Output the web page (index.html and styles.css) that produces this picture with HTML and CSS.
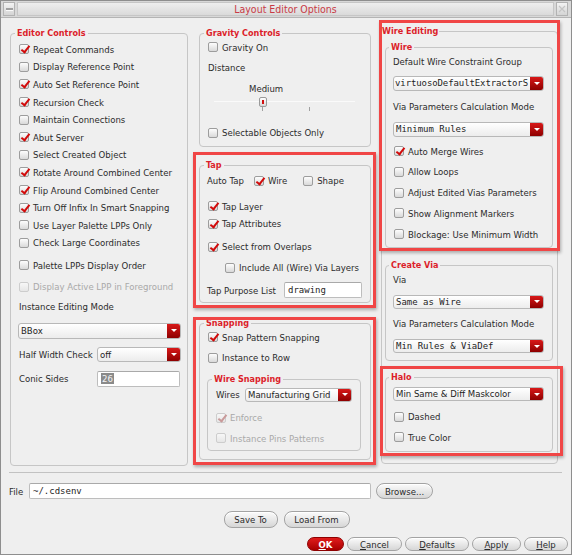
FILE: index.html
```html
<!DOCTYPE html>
<html lang="en">
<head>
<meta charset="utf-8">
<title>Layout Editor Options</title>
<link rel="stylesheet" href="styles.css">
</head>
<body>
<div class="window">
  <div class="titlebar">
    <div class="tb-btn"><span class="tb-dash"></span></div>
    <div class="tb-title">Layout Editor Options</div>
    <div class="tb-btn"><svg width="8" height="8" viewBox="0 0 8 8"><path d="M1 1L7 7M7 1L1 7" stroke="#c4c4c4" stroke-width="1.2"/></svg></div>
  </div>

  <div class="main">
    <!-- left column -->
    <div class="group editor">
      <div class="gtitle">Editor Controls</div>
      <div class="list17">
        <div class="chk"><span class="box on"></span>Repeat Commands</div>
        <div class="chk"><span class="box"></span>Display Reference Point</div>
        <div class="chk"><span class="box on"></span>Auto Set Reference Point</div>
        <div class="chk"><span class="box on"></span>Recursion Check</div>
        <div class="chk"><span class="box"></span>Maintain Connections</div>
        <div class="chk"><span class="box on"></span>Abut Server</div>
        <div class="chk"><span class="box"></span>Select Created Object</div>
        <div class="chk"><span class="box on"></span>Rotate Around Combined Center</div>
        <div class="chk"><span class="box on"></span>Flip Around Combined Center</div>
        <div class="chk"><span class="box on"></span>Turn Off Infix In Smart Snapping</div>
        <div class="chk"><span class="box"></span>Use Layer Palette LPPs Only</div>
        <div class="chk"><span class="box"></span>Check Large Coordinates</div>
      </div>
      <div class="chk palette"><span class="box"></span>Palette LPPs Display Order</div>
      <div class="chk disabled active-lpp"><span class="box"></span>Display Active LPP in Foreground</div>
      <div class="label mode-label">Instance Editing Mode</div>
      <div class="sel bbox"><span class="val">BBox</span><span class="arr"></span></div>
      <div class="frow half">
        <span class="flabel">Half Width Check</span>
        <div class="sel grow"><span class="val">off</span><span class="arr"></span></div>
      </div>
      <div class="frow conic">
        <span class="flabel">Conic Sides</span>
        <div class="input grow"><span class="picked">26</span></div>
      </div>
    </div>

    <!-- middle column -->
    <div class="col mid">
      <div class="group gravity">
        <div class="gtitle">Gravity Controls</div>
        <div class="chk r16 g-on"><span class="box"></span>Gravity On</div>
        <div class="label r16 dist">Distance</div>
        <div class="label r16 medium">Medium</div>
        <div class="slider">
          <div class="track"></div>
          <div class="tick t1"></div>
          <div class="tick t2"></div>
          <div class="handle"></div>
        </div>
        <div class="chk r16 selobj"><span class="box"></span>Selectable Objects Only</div>
      </div>

      <div class="group tap">
        <div class="gtitle">Tap</div>
        <div class="frow r16 autotap">
          <span class="label at-label">Auto Tap</span>
          <span class="chk"><span class="box on"></span>Wire</span>
          <span class="chk shape"><span class="box"></span>Shape</span>
        </div>
        <div class="chk r16 taplayer"><span class="box on"></span>Tap Layer</div>
        <div class="chk r16 tapattr"><span class="box on"></span>Tap Attributes</div>
        <div class="chk r16 overlaps"><span class="box on"></span>Select from Overlaps</div>
        <div class="chk r16 inclall"><span class="box"></span>Include All (Wire) Via Layers</div>
        <div class="frow purpose">
          <span class="flabel">Tap Purpose List</span>
          <div class="input grow mono">drawing</div>
        </div>
      </div>

      <div class="group snapping">
        <div class="gtitle">Snapping</div>
        <div class="chk r16 snappat"><span class="box on"></span>Snap Pattern Snapping</div>
        <div class="chk r16 instrow"><span class="box"></span>Instance to Row</div>
        <div class="group wiresnap">
          <div class="gtitle">Wire Snapping</div>
          <div class="frow wires">
            <span class="flabel">Wires</span>
            <div class="sel grow"><span class="val">Manufacturing Grid</span><span class="arr"></span></div>
          </div>
          <div class="chk r16 disabled enforce"><span class="box on"></span>Enforce</div>
          <div class="chk r16 disabled pins"><span class="box"></span>Instance Pins Patterns</div>
        </div>
      </div>
    </div>

    <!-- right column -->
    <div class="group wedit">
      <div class="gtitle flush">Wire Editing</div>
      <div class="group inner wire">
        <div class="gtitle">Wire</div>
        <div class="label r16 l-first">Default Wire Constraint Group</div>
        <div class="sel s-a"><span class="val mono tight">virtuosoDefaultExtractorS</span><span class="arr"></span></div>
        <div class="label r16 l-next">Via Parameters Calculation Mode</div>
        <div class="sel s-b"><span class="val mono">Minimum Rules</span><span class="arr"></span></div>
        <div class="chk r16 c-first"><span class="box on"></span>Auto Merge Wires</div>
        <div class="chk r16 c-next"><span class="box"></span>Allow Loops</div>
        <div class="chk r16 c-next"><span class="box"></span>Adjust Edited Vias Parameters</div>
        <div class="chk r16 c-next"><span class="box"></span>Show Alignment Markers</div>
        <div class="chk r16 c-next"><span class="box"></span>Blockage: Use Minimum Width</div>
      </div>
      <div class="group inner createvia">
        <div class="gtitle">Create Via</div>
        <div class="label r16 l-via">Via</div>
        <div class="sel s-c"><span class="val mono">Same as Wire</span><span class="arr"></span></div>
        <div class="label r16 l-next2">Via Parameters Calculation Mode</div>
        <div class="sel s-d"><span class="val mono">Min Rules &amp; ViaDef</span><span class="arr"></span></div>
      </div>
      <div class="group inner halo">
        <div class="gtitle">Halo</div>
        <div class="sel s-e"><span class="val">Min Same &amp; Diff Maskcolor</span><span class="arr"></span></div>
        <div class="chk r16 dashed"><span class="box"></span>Dashed</div>
        <div class="chk r16 truecolor"><span class="box"></span>True Color</div>
      </div>
    </div>
  </div>

  <div class="sep"></div>

  <div class="file-row">
    <span class="flabel file-label">File</span>
    <div class="input mono file-input">~/.cdsenv</div>
    <button class="btn browse">Browse...</button>
  </div>
  <div class="saveload">
    <button class="btn save">Save To</button>
    <button class="btn load">Load From</button>
  </div>
  <div class="actions">
    <button class="btn ok"><u>O</u>K</button>
    <button class="btn cancel"><u>C</u>ancel</button>
    <button class="btn defaults"><u>D</u>efaults</button>
    <button class="btn apply"><u>A</u>pply</button>
    <button class="btn help"><u>H</u>elp</button>
  </div>

  <!-- annotation highlights -->
  <div class="hl hl-wire"></div>
  <div class="hl hl-tap"></div>
  <div class="hl hl-snap"></div>
  <div class="hl hl-halo"></div>
</div>
</body>
</html>
```

FILE: styles.css
```css
* { box-sizing: border-box; }
html, body { margin: 0; padding: 0; }
body {
  background: #efefef;
  font-family: "DejaVu Sans Condensed", "DejaVu Sans", sans-serif;
  font-size: 9.5px;
  color: #2b2b2b;
}
.mono { font-family: "DejaVu Sans Mono", "Liberation Mono", monospace; font-size: 9px; }
.tight { letter-spacing: -0.1px; }

.window {
  position: relative;
  width: 572px;
  height: 555px;
  border: 1px solid #8e8e8e;
  background: #efefef;
  overflow: hidden;
}

/* title bar */
.titlebar {
  height: 17px;
  display: flex;
  gap: 2px;
  padding: 1px 3px 1px 2px;
  background: #d8d8d8;
  border-bottom: 1px solid #b4b4b4;
}
.tb-btn {
  width: 12px;
  border: 1px solid #b2b2b2;
  background: linear-gradient(#f3f3f3, #d4d4d4);
  display: flex;
  align-items: center;
  justify-content: center;
}
.tb-dash { width: 7px; height: 3px; background: #a0a0a0; border-bottom: 1px solid #fafafa; }
.tb-title {
  flex: 1;
  text-align: center;
  color: #c83a45;
  font-size: 10.5px;
  line-height: 13px;
  border: 1px solid #c6c6c6;
  background: linear-gradient(#eeeeee, #dadada);
}

/* main area */
.main {
  height: 454px;
  display: flex;
  align-items: flex-start;
  padding: 15px 0 0 9px;
}
.col { display: flex; flex-direction: column; }
.mid { width: 172px; margin-left: 11px; }

.group {
  border: 1px solid #c6c6c6;
  border-radius: 4px;
}
.gtitle {
  width: max-content;
  height: 12px;
  line-height: 12px;
  margin: -7px 0 0 -4px;
  padding: 0 2px;
  background: #efefef;
  color: #dc1e2a;
  font-weight: bold;
  font-size: 9px;
}
.gtitle.flush { padding: 0 1px; }

.chk { display: flex; align-items: center; white-space: nowrap; }
.box {
  position: relative;
  flex: none;
  width: 10px;
  height: 10px;
  margin-right: 4px;
  border: 1px solid #9d9d9d;
  border-radius: 2px;
  background: linear-gradient(#fdfdfd, #d9d9d9);
}
.box.on::after {
  content: "";
  position: absolute;
  left: 3px;
  top: -1px;
  width: 3px;
  height: 7px;
  border: solid #d20a0a;
  border-width: 0 2px 2px 0;
  transform: rotate(38deg);
}
.disabled { color: #a9a9a9; }
.disabled .box { border-color: #cdcdcd; background: linear-gradient(#f7f7f7, #e6e6e6); }
.disabled .box.on::after { border-color: #c99a9a; }

.label { display: flex; align-items: center; white-space: nowrap; }
.r16 { height: 16px; }
.frow { display: flex; align-items: center; }
.grow { flex: 1; min-width: 0; }
.flabel { white-space: nowrap; }

/* dropdown */
.sel {
  display: flex;
  height: 15px;
  border: 1px solid #b8b8b8;
  border-radius: 3px;
  background: linear-gradient(#ffffff, #ececec);
  overflow: hidden;
}
.sel .val {
  flex: 1;
  min-width: 0;
  padding-left: 2px;
  line-height: 13px;
  white-space: nowrap;
  overflow: hidden;
  color: #1e1e1e;
}
.sel .val.tight { padding-left: 1px; }
.sel .arr {
  flex: none;
  width: 13px;
  background: linear-gradient(#d81818, #8e0000);
  display: flex;
  align-items: center;
  justify-content: center;
}
.sel .arr::before {
  content: "";
  border-left: 3px solid transparent;
  border-right: 3px solid transparent;
  border-top: 3px solid #ffffff;
}

/* text input */
.input {
  height: 16px;
  border: 1px solid #bdbdbd;
  border-top-color: #a9a9a9;
  border-radius: 2px;
  background: #ffffff;
  padding-left: 3px;
  line-height: 14px;
  white-space: nowrap;
  overflow: hidden;
  color: #1e1e1e;
}
.picked { background: #8a8a8a; color: #f4f4f4; padding: 0 1px; }

/* editor controls (left) */
.editor { width: 178px; height: 433px; padding: 0 6px 0 8px; }
.list17 { margin-top: 1.5px; }
.list17 .chk { height: 17.6px; }
.palette { height: 17.6px; margin-top: 5px; }
.active-lpp { height: 17.6px; margin-top: 3.5px; }
.mode-label { height: 17.6px; margin-top: 2.8px; }
.bbox { height: 16px; margin: 7px 0 0 -1px; }
.half { height: 15px; margin-top: 8px; }
.half .flabel, .conic .flabel { width: 78px; }
.conic { height: 16px; margin-top: 9px; }
.conic .input { margin-right: 1px; height: 16px; }

/* gravity */
.gravity { height: 114px; padding: 0 0 0 8px; }
.g-on { margin-top: 0; }
.dist { margin-top: 4.7px; }
.medium { margin: 5px 0 0 41px; }
.slider { position: relative; width: 141px; height: 14px; margin-left: 6px; }
.slider .track { position: absolute; left: 0; right: 0; top: 4px; height: 1px; background: #a8a8a8; border-bottom: 1px solid #fafafa; }
.slider .tick { position: absolute; top: 10px; width: 1px; height: 4px; background: #a0a0a0; }
.slider .t1 { left: 48px; }
.slider .t2 { left: 95px; }
.slider .handle {
  position: absolute;
  left: 45px;
  top: 0;
  width: 8px;
  height: 10px;
  border: 1px solid #9a9a9a;
  border-radius: 2px;
  background: linear-gradient(#ffffff, #d8d8d8);
}
.slider .handle::after {
  content: "";
  position: absolute;
  left: 2px;
  top: 2px;
  width: 2px;
  height: 4px;
  background: #d01010;
}
.selobj { margin-top: 14.3px; }

/* tap */
.tap { margin-top: 18px; height: 138px; padding: 0 0 0 8px; }
.autotap { margin-top: 1.7px; }
.at-label { margin-left: -1px; width: 47px; }
.autotap .shape { margin-left: 16px; }
.taplayer { margin-top: 9.6px; }
.tapattr { margin-top: 1.7px; }
.overlaps { margin-top: 6.7px; }
.inclall { margin: 5px 0 0 17px; }
.purpose { height: 16px; margin: 6.6px 0 0 -1px; }
.purpose .flabel { width: 77px; }
.purpose .input { margin-right: 8px; }

/* snapping */
.snapping { margin-top: 20px; height: 137px; padding: 0 0 0 8px; }
.snappat { margin-top: 0; }
.instrow { margin-top: 4.6px; }
.wiresnap { width: 154px; height: 72px; margin: 13.7px 0 0 -1px; padding: 0 0 0 8px; }
.wires { height: 14px; margin-top: 2.7px; }
.wires .flabel { width: 29px; }
.wires .sel { height: 14px; margin-right: 8px; }
.wires .sel .val { line-height: 12px; }
.enforce { margin-top: 7.7px; }
.pins { margin-top: 4.6px; }

/* right column */
.wedit { width: 177px; height: 433px; margin: -2px 0 0 10px; padding: 0 4px 0 3px; }
.inner { width: 168px; padding: 0 8px 0 7px; }
.wire { margin-top: 10px; height: 201px; }
.l-first { margin-top: 0; }
.s-a { margin-top: 7px; }
.l-next { margin-top: 7px; }
.s-b { margin-top: 7.5px; }
.c-first { margin: 6.5px 0 0 1px; }
.c-next { margin: 4.75px 0 0 1px; }

.createvia { margin-top: 17px; height: 96px; }
.l-via { margin-top: 0.3px; }
.s-c { height: 14px; margin-top: 7.7px; }
.l-next2 { margin-top: 6.3px; }
.s-d { height: 14px; margin-top: 8px; }
.s-c .val, .s-d .val, .s-e .val { line-height: 12px; }

.halo { margin-top: 16px; height: 75px; }
.s-e { height: 14px; margin-top: 4.3px; }
.dashed { margin: 7.4px 0 0 1px; }
.truecolor { margin: 4.6px 0 0 1px; }

/* footer */
.sep { height: 1px; margin: 0 9px 0 8px; background: #c2c2c2; }
.file-row { display: flex; align-items: center; height: 16px; margin-top: 10px; padding-left: 8px; }
.file-label { width: 20px; }
.file-input { width: 342px; height: 16px; }

.btn {
  font: inherit;
  color: #2b2b2b;
  height: 16px;
  padding: 0;
  border: 1px solid #a3a3a3;
  border-radius: 8px;
  background: linear-gradient(#fbfbfb, #d6d6d6);
  box-shadow: 0 1px 0 #ffffff inset;
  line-height: 13px;
}
.btn u { text-decoration-thickness: 1px; text-underline-offset: 1px; }
.browse { width: 57px; margin-left: 5px; }
.saveload { display: flex; justify-content: center; gap: 6px; margin-top: 12px; height: 17px; padding-left: 1px; }
.save { width: 54px; height: 17px; }
.load { width: 66px; height: 17px; }
.actions { display: flex; justify-content: flex-end; gap: 3px; margin-top: 9px; padding-right: 3px; }
.actions .btn { height: 14px; line-height: 11px; }
.ok {
  width: 37px;
  color: #ffffff;
  font-weight: bold;
  border-color: #8e0000;
  background: linear-gradient(#e01c1c, #a80000);
  box-shadow: none;
}
.cancel { width: 55px; }
.defaults { width: 64px; }
.apply { width: 49px; }
.help { width: 44px; }

/* red annotation rectangles drawn over the dialog */
.hl {
  position: absolute;
  border: 3px solid #f04646;
  box-shadow: 1px 2px 3px rgba(0, 0, 0, 0.28);
  pointer-events: none;
}
.hl-wire { left: 378px; top: 19px; width: 181px; height: 231px; }
.hl-tap  { left: 192px; top: 151px; width: 183px; height: 156px; }
.hl-snap { left: 192px; top: 316px; width: 183px; height: 148px; }
.hl-halo { left: 379px; top: 365px; width: 183px; height: 90px; }
```
